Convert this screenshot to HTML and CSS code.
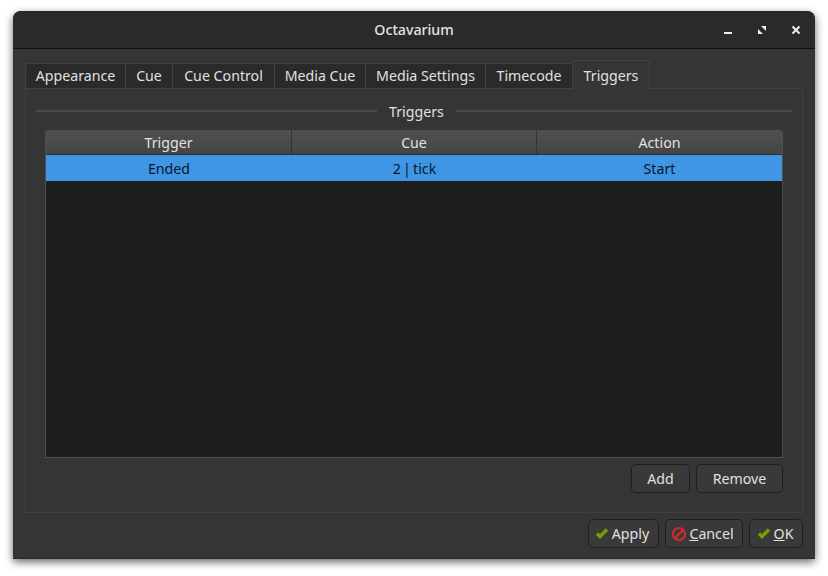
FILE: index.html
```html
<!DOCTYPE html>
<html lang="en">
<head>
  <meta charset="UTF-8">
  <title>Octavarium</title>
  <link rel="stylesheet" href="styles.css">
</head>
<body>

  <div class="window">
    <div class="titlebar">
      <span class="title">Octavarium</span>
      <div class="win-buttons">
        <svg width="10" height="10" viewBox="0 0 10 10"><rect x="1" y="7" width="8" height="2" fill="#eee"/></svg>
        <svg width="10" height="10" viewBox="0 0 10 10"><path d="M4 1H9V6ZM1 4V9H6Z" fill="#eee"/></svg>
        <svg width="10" height="10" viewBox="0 0 10 10"><path d="M1.5 1.5L8.5 8.5M8.5 1.5L1.5 8.5" stroke="#eee" stroke-width="2"/></svg>
      </div>
    </div>

    <div class="content">
      <div class="tabs">
        <div class="tab tab-appearance">Appearance</div>
        <div class="tab tab-cue">Cue</div>
        <div class="tab tab-control">Cue Control</div>
        <div class="tab tab-media">Media Cue</div>
        <div class="tab tab-settings">Media Settings</div>
        <div class="tab tab-timecode">Timecode</div>
        <div class="tab tab-triggers active">Triggers</div>
      </div>

      <div class="pane">
        <div class="group-title"><span>Triggers</span></div>

        <div class="table">
          <div class="thead">
            <div class="th">Trigger</div>
            <div class="th">Cue</div>
            <div class="th">Action</div>
          </div>
          <div class="row selected">
            <div class="td">Ended</div>
            <div class="td cue-name">2 | tick</div>
            <div class="td">Start</div>
          </div>
        </div>

        <div class="table-buttons">
          <button class="btn btn-add">Add</button>
          <button class="btn btn-remove">Remove</button>
        </div>
      </div>

      <div class="dialog-buttons">
        <button class="btn btn-apply">
          <svg width="16" height="16" viewBox="0 0 16 16"><path d="M3 7.5L6 10.5 13 3.5" fill="none" stroke="#73a000" stroke-width="3.5"/></svg>
          Apply
        </button>
        <button class="btn btn-cancel">
          <svg width="16" height="16" viewBox="0 0 16 16"><circle cx="8" cy="8" r="6" fill="none" stroke="#d9282e" stroke-width="2"/><path d="M4 12L12 4" stroke="#d9282e" stroke-width="2"/></svg>
          <span><u>C</u>ancel</span>
        </button>
        <button class="btn btn-ok">
          <svg width="16" height="16" viewBox="0 0 16 16"><path d="M3 7.5L6 10.5 13 3.5" fill="none" stroke="#73a000" stroke-width="3.5"/></svg>
          <span><u>O</u>K</span>
        </button>
      </div>
    </div>
  </div>

</body>
</html>
```

FILE: styles.css
```css
body {
  margin: 0;
  padding: 11px 13px 0;
  box-sizing: border-box;
  min-height: 100vh;
  background: #fff;
  font-family: "Noto Sans", sans-serif;
  font-size: 14.2px;
  color: #e0e0e0;
}

.window {
  width: 802px;
  height: 548px;
  display: flex;
  flex-direction: column;
  background: #353535;
  border-bottom: 1px solid #2a2a2a;
  box-sizing: border-box;
  border-radius: 8px 8px 0 0;
  box-shadow: 0 3px 8px rgba(0, 0, 0, 0.6);
}

.titlebar {
  height: 38px;
  box-sizing: border-box;
  flex: none;
  display: flex;
  align-items: center;
  justify-content: center;
  position: relative;
  background: #2a2a2a;
  border-bottom: 1px solid #111;
  border-radius: 8px 8px 0 0;
}

.title {
  font-weight: 500;
  color: #e4e4e4;
}

.win-buttons {
  position: absolute;
  right: 14px;
  top: 14px;
  display: flex;
  gap: 24px;
}

.win-buttons svg {
  display: block;
}

.content {
  flex: 1;
  display: flex;
  flex-direction: column;
  padding: 10px 12px 0;
}

.tabs {
  display: flex;
  align-items: flex-end;
  height: 29px;
  flex: none;
}

.tab {
  height: 25px;
  box-sizing: border-box;
  padding-bottom: 2px;
  display: flex;
  align-items: center;
  justify-content: center;
  background: #2a2a2a;
  border-top: 1px solid #414141;
  border-left: 1px solid #414141;
}

.tab-appearance { width: 100px; border-radius: 3px 0 0 0; }
.tab-cue { width: 47px; }
.tab-control { width: 102px; }
.tab-media { width: 91px; }
.tab-settings { width: 120px; }
.tab-timecode { width: 87px; }
.tab-triggers { width: 78px; }

.tab.active {
  height: 29px;
  padding-bottom: 0;
  background: #353535;
  border-radius: 3px 3px 0 0;
  border-right: 1px solid #414141;
  position: relative;
  top: 1px;
  z-index: 1;
}

.pane {
  height: 425px;
  flex: none;
  box-sizing: border-box;
  border: 1px solid #414141;
  padding: 14px 10px 0;
  display: flex;
  flex-direction: column;
}

.group-title {
  display: flex;
  align-items: center;
  height: 16px;
  gap: 12px;
  margin-bottom: 11px;
}

.group-title span {
  flex: none;
}

.group-title::before,
.group-title::after {
  content: "";
  height: 2px;
  background: #4a4a4a;
}

.group-title::before {
  flex: none;
  width: 341px;
}

.group-title::after {
  flex: 1;
}

.table {
  height: 328px;
  margin: 0 9px;
  box-sizing: border-box;
  background: #1e1e1e;
  border: 1px solid #4f4f4f;
  border-top: none;
  border-radius: 3px 3px 0 0;
  overflow: hidden;
}

.thead {
  display: grid;
  grid-template-columns: 246px 245px 1fr;
  height: 25px;
  background: linear-gradient(#505050, #454545);
  border-bottom: 1px solid #2e2e2e;
  box-sizing: border-box;
}

.th {
  display: flex;
  align-items: center;
  justify-content: center;
  border-right: 1px solid #333;
}

.th:last-child {
  border-right: none;
}

.row {
  display: grid;
  grid-template-columns: 246px 245px 1fr;
  height: 26px;
}

.row.selected {
  background: #3f96e4;
  color: #0a1626;
}

.td {
  display: flex;
  align-items: center;
  justify-content: center;
}

.cue-name {
  word-spacing: -1.5px;
}

.table-buttons {
  display: flex;
  justify-content: flex-end;
  gap: 6px;
  margin: 6px 9px 0;
}

.btn {
  height: 29px;
  padding: 0;
  display: flex;
  align-items: center;
  justify-content: center;
  gap: 2px;
  font-family: inherit;
  font-size: 14.2px;
  color: #e0e0e0;
  background: #393939;
  border: 1px solid #1f1f1f;
  border-radius: 5px;
}

.btn-add { width: 59px; }
.btn-remove { width: 87px; }
.btn-apply { width: 71px; padding-right: 4px; }
.btn-cancel { width: 78px; padding-right: 3px; }
.btn-ok { width: 54px; padding-right: 3px; }

.dialog-buttons {
  display: flex;
  justify-content: flex-end;
  gap: 6px;
  margin-top: 6px;
}
```
